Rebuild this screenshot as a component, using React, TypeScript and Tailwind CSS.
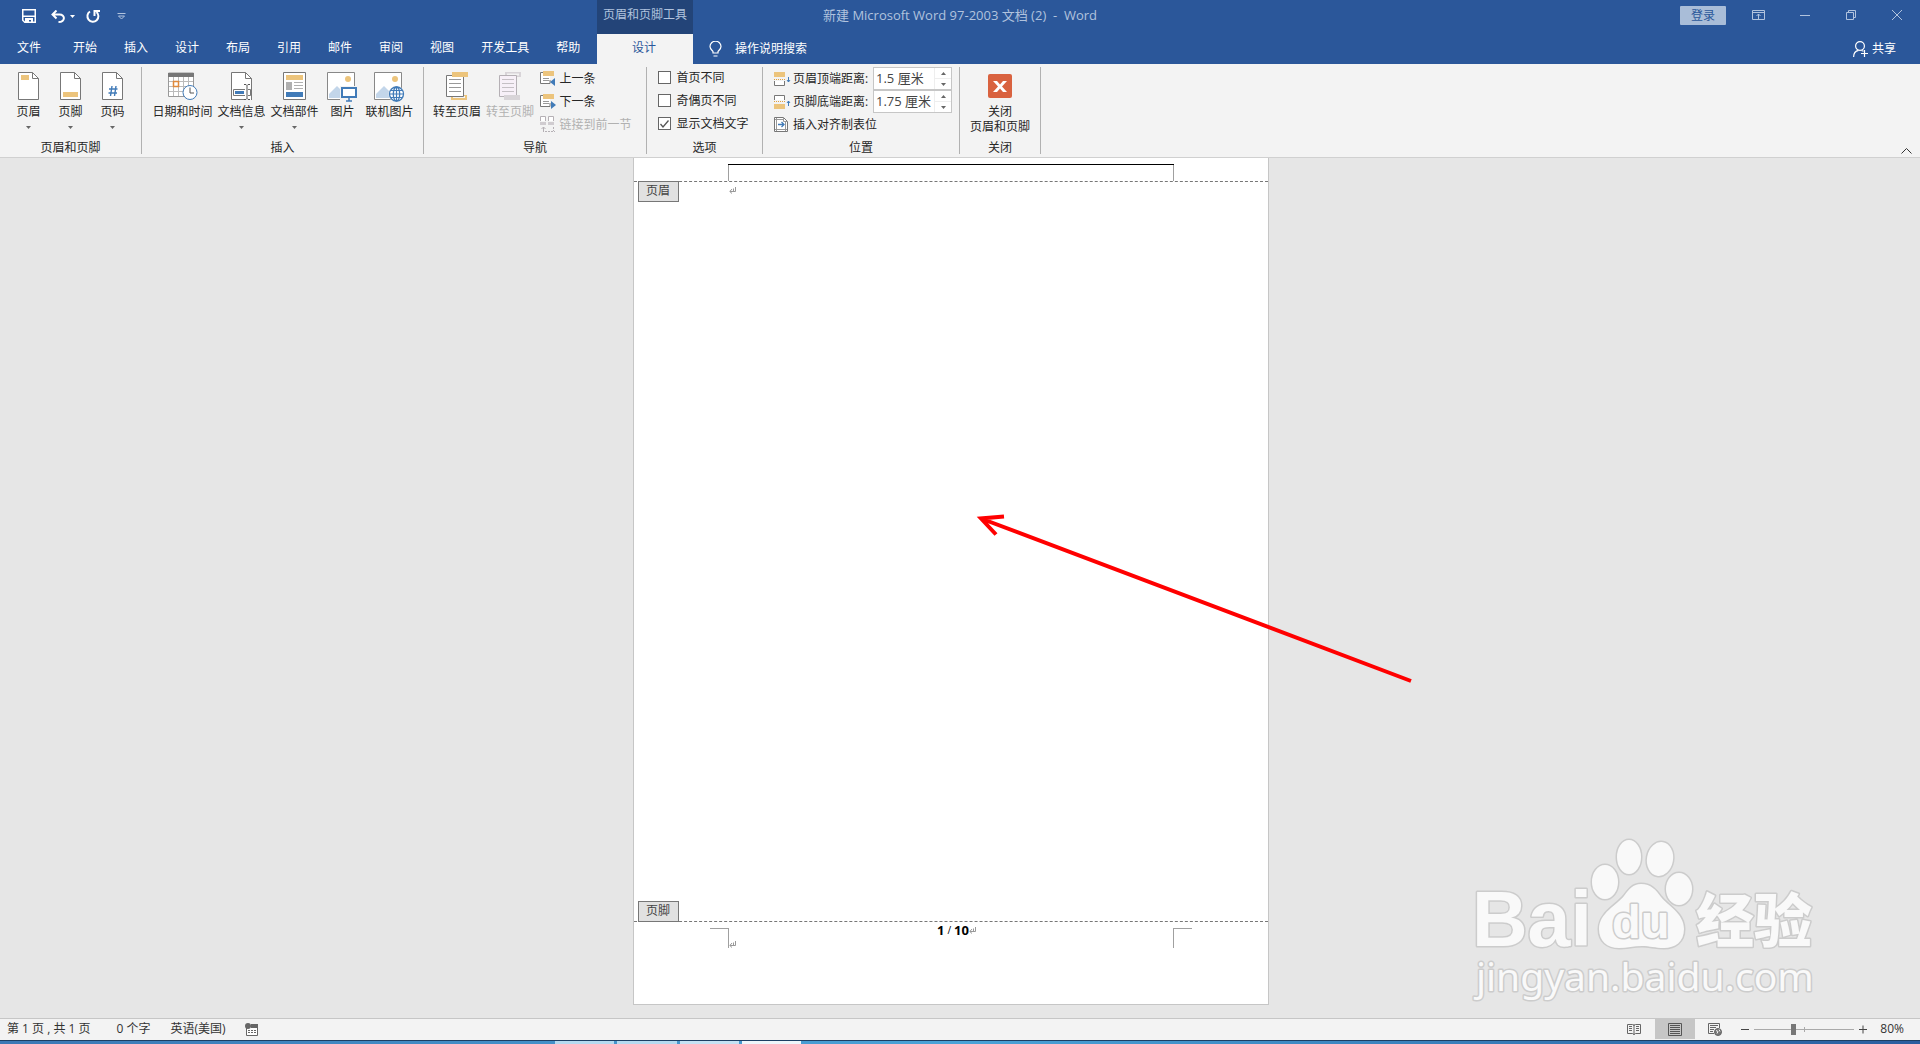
import type { ReactNode } from "react";

const HEADER_TABS = ["开始", "插入", "设计", "布局", "引用", "邮件", "审阅", "视图", "开发工具", "帮助"];

function Caret({ className = "" }: { className?: string }) {
  return (
    <svg width="5" height="3" viewBox="0 0 5 3" className={className}>
      <path d="M0 0h5L2.500 3z" fill="currentColor" />
    </svg>
  );
}

function Sheet({ children }: { children: ReactNode }) {
  return (
    <svg width="22" height="28" viewBox="0 0 22 28" fill="none">
      <path d="M.5.5h14l6 6v21H.500z" fill="#fff" stroke="#777" />
      <path d="M14.500.500v6h6" stroke="#777" />
      {children}
    </svg>
  );
}

const HeaderIcon = () => (
  <Sheet>
    <path d="M3 3h8v5H3z" fill="#ecc47c" />
  </Sheet>
);
const FooterIcon = () => (
  <Sheet>
    <path d="M3 20h15v5H3z" fill="#ecc47c" />
  </Sheet>
);
const PageNumberIcon = () => (
  <Sheet>
    <path d="M10 14 8.500 24M14 14l-1.500 10M7 17h8.500M6.500 21H15" stroke="#417bb8" strokeWidth="1.400" />
  </Sheet>
);
const DocInfoIcon = () => (
  <svg width="22" height="28" viewBox="0 0 22 28" fill="none">
    <path d="M.5.5h14l6 6v21H.500z" fill="#fff" stroke="#777" />
    <path d="M14.500.500v6h6" stroke="#777" />
    <path d="M2.500 17.500h13v6h-13z" fill="#fff" stroke="#777" />
    <path d="M4 19h9v3H4z" fill="#417bb8" />
    <path d="M14 12h6v16h-6z" fill="#fff" />
    <path d="M13 12.500h2l1 1 1-1h2M13 27.500h2l1-1 1 1h2M16 13.500v13" stroke="#555" />
    <path d="M17 17.500h2.500v6H17M20.500 10v18" stroke="#777" />
  </svg>
);
const CalendarIcon = () => (
  <svg width="30" height="28" viewBox="0 0 30 28" fill="none">
    <path d="M.5 1h25v23.500H.500z" fill="#fff" stroke="#999" />
    <path d="M0 1h26v4H0z" fill="#777" />
    <path d="M5.500 5v19M10.500 5v19M15.500 5v19M20.500 5v19M1 9.500h24M1 14.500h24M1 19.500h24" stroke="#bbb" />
    <path d="M5.500 9.500h5v5h-5z" fill="#fff" stroke="#e08a3c" strokeWidth="1.500" />
    <circle cx="22" cy="20.500" r="7" fill="#fff" stroke="#417bb8" />
    <path d="M22 15.500v5.500h4" stroke="#555" />
  </svg>
);
const PartsIcon = () => (
  <svg width="23" height="28" viewBox="0 0 23 28" fill="none">
    <path d="M.5.5h22v27H.500z" fill="#fff" stroke="#777" />
    <path d="M3 3h17v5H3z" fill="#ecc47c" />
    <path d="M3 10h6v8H3z" fill="#b0b0b0" />
    <path d="M11 10.500h9M11 13.500h9M11 16.500h9" stroke="#b0b0b0" />
    <path d="M3 20h17v5H3z" fill="#417bb8" />
  </svg>
);
function Photo() {
  return (
    <>
      <path d="M.5.5h27v27H.500z" fill="#fff" stroke="#888" />
      <circle cx="21" cy="7" r="3" fill="#ecc47c" />
      <path d="M2 26v-4l8-8 6 6v6z" fill="#c3d6ea" />
    </>
  );
}
const PictureIcon = () => (
  <svg width="31" height="30" viewBox="0 0 31 30" fill="none">
    <Photo />
    <path d="M13 14h18v16H13z" fill="#f3f3f3" />
    <path d="M15 16h14v9H15z" fill="#fff" stroke="#417bb8" strokeWidth="2" />
    <path d="M19 29h6M22 25v4" stroke="#417bb8" strokeWidth="1.500" />
  </svg>
);
const OnlinePictureIcon = () => (
  <svg width="31" height="30" viewBox="0 0 31 30" fill="none">
    <Photo />
    <circle cx="22.500" cy="22" r="8" fill="#f3f3f3" />
    <circle cx="22.500" cy="22" r="7" fill="#fff" stroke="#417bb8" strokeWidth="1.300" />
    <ellipse cx="22.500" cy="22" rx="3.200" ry="7" stroke="#417bb8" strokeWidth="1.300" />
    <path d="M15.500 22h14M17 18.500h11M17 25.500h11M22.500 15v14" stroke="#417bb8" strokeWidth="1.200" />
  </svg>
);
const GotoHeaderIcon = () => (
  <svg width="22" height="28" viewBox="0 0 22 28" fill="none">
    <path d="M5 23h16v5H5z" fill="#ecc47c" />
    <path d="M7 24h12v2H7z" fill="#f3f3f3" />
    <path d="M.5 3.500h17v21H.500z" fill="#fff" stroke="#777" />
    <path d="M3 7.500h12M3 11.500h12M3 15.500h12M3 19.500h12" stroke="#999" />
    <path d="M6 0h16v5H6z" fill="#ecc47c" />
  </svg>
);
const GotoFooterIcon = () => (
  <svg width="22" height="28" viewBox="0 0 22 28" fill="none">
    <path d="M6 0h16v5H6z" fill="#d8d4d8" />
    <path d="M8 1.500h12v2H8z" fill="#f3f3f3" />
    <path d="M.5 3.500h17v21H.500z" fill="#f7f0f8" stroke="#b5b0b5" />
    <path d="M3 7.500h12M3 11.500h12M3 15.500h12M3 19.500h12" stroke="#c5c0c5" />
    <path d="M5 23h16v5H5z" fill="#d8d4d8" />
  </svg>
);
function StepIcon({ arrow }: { arrow: string }) {
  return (
    <svg width="16" height="16" viewBox="0 0 16 16" fill="none">
      <path d="M1 2h9v10H1z" fill="#fff" />
      <path d="M3 1.500H.500v11H10V9" stroke="#777" />
      <path d="M3 7.500h6M3 9.500h6" stroke="#999" />
      <path d="M3 0h11v5H3z" fill="#ecc47c" />
      <path d={arrow} fill="#417bb8" />
    </svg>
  );
}
const LinkPrevIcon = () => (
  <svg width="16" height="17" viewBox="0 0 16 17" fill="none" stroke="#b5b0b5">
    <path d="M.5 5V.5h5V5M8.500 5V.5h5V5" fill="#fff" />
    <path d="M0 6h6v3H0zM8 6h6v3H8z" fill="#d0ccd0" stroke="none" />
    <path d="M3.500 16v-5M1.500 13l2-2 2 2" />
    <path d="M5 15.500h10M13.500 11v4" strokeDasharray="2 1" />
  </svg>
);
function DistanceIcon({ bottom = false }: { bottom?: boolean }) {
  return (
    <svg width="17" height="14" viewBox="0 0 17 14" fill="none">
      {bottom ? (
        <>
          <path d="M.5 5V.5h10V5" fill="#fff" stroke="#777" />
          <path d="M0 9h11v5H0z" fill="#ecc47c" />
          <path d="M0 6.500h11" stroke="#e0a040" strokeDasharray="1 1" />
          <path d="M14.500 11V6M13 8l1.500-2L16 8" stroke="#417bb8" />
        </>
      ) : (
        <>
          <path d="M.5 9v4.500h10V9" fill="#fff" stroke="#777" />
          <path d="M0 0h11v5H0z" fill="#ecc47c" />
          <path d="M0 7.500h11" stroke="#e0a040" strokeDasharray="1 1" />
          <path d="M14.500 5v5M13 8l1.500 2L16 8" stroke="#417bb8" />
        </>
      )}
    </svg>
  );
}
const AlignTabIcon = () => (
  <svg width="14" height="15" viewBox="0 0 14 15" fill="none">
    <path d="M.5.5h9l4 4v10H.500z" fill="#fff" stroke="#777" />
    <path d="M9.500.500v4h4M2.500 1v13M11.500 5v9M1 2.500h8M1 12.500h12" stroke="#999" />
    <path d="M4 7.500h6M7.500 5 10 7.500 7.500 10" stroke="#417bb8" strokeWidth="1.300" />
  </svg>
);

function Group({ label, width, children }: { label: string; width: string; children: ReactNode }) {
  return (
    <section aria-label={label} className={`${width} flex shrink-0 flex-col border-r border-[#b1b1b1]`}>
      <div className="flex flex-1 justify-center">{children}</div>
      <div className="h-[13px] text-center leading-[13px]">{label}</div>
    </section>
  );
}

function BigButton({
  icon,
  label,
  width,
  menu = false,
  disabled = false,
}: {
  icon: ReactNode;
  label: string;
  width: string;
  menu?: boolean;
  disabled?: boolean;
}) {
  return (
    <button disabled={disabled} className={`${width} flex flex-col items-center pt-[5px] whitespace-nowrap disabled:text-[#b1b1b1]`}>
      <span className="flex h-8 items-start">{icon}</span>
      <span className="h-4 leading-4">{label}</span>
      {menu && <Caret className="mt-[6px] text-[#666]" />}
    </button>
  );
}

function SmallButton({ icon, label, disabled = false }: { icon: ReactNode; label: string; disabled?: boolean }) {
  return (
    <button disabled={disabled} className="flex h-[23px] items-center whitespace-nowrap disabled:text-[#b1b1b1]">
      <span className="w-[19px]">{icon}</span>
      {label}
    </button>
  );
}

function Check({ label, checked = false }: { label: string; checked?: boolean }) {
  return (
    <label className="flex h-[23px] items-center gap-[5px] pb-[2px] whitespace-nowrap">
      <span className="grid h-[13px] w-[13px] place-items-center">
        <input
          type="checkbox"
          defaultChecked={checked}
          className="peer col-start-1 row-start-1 h-[13px] w-[13px] appearance-none border border-[#666] bg-white"
        />
        <svg width="9" height="8" viewBox="0 0 9 8" className="pointer-events-none invisible col-start-1 row-start-1 peer-checked:visible">
          <path d="M.5 4 3 7 8.500.500" fill="none" stroke="#555" strokeWidth="1.300" />
        </svg>
      </span>
      {label}
    </label>
  );
}

function Distance({ id, label, value, bottom = false }: { id: string; label: string; value: string; bottom?: boolean }) {
  return (
    <div className="flex h-[23px] items-center whitespace-nowrap">
      <span className="w-[19px]">
        <DistanceIcon bottom={bottom} />
      </span>
      <label htmlFor={id} className="w-20">
        {label}:
      </label>
      <span className="flex h-[23px] w-[79px] border border-[#c6c6c6] bg-white">
        <input id={id} defaultValue={value} className="w-[60px] bg-transparent pl-[2px] text-[13px] text-[#444] outline-none" />
        <span className="flex flex-1 flex-col border-l border-[#eee] text-[#666]">
          <button aria-label={`增加${label}`} className="flex flex-1 items-center justify-center border-b border-[#eee]">
            <Caret className="rotate-180" />
          </button>
          <button aria-label={`减少${label}`} className="flex flex-1 items-center justify-center">
            <Caret />
          </button>
        </span>
      </span>
    </div>
  );
}

function TitleBar() {
  return (
    <div className="grid h-[34px] grid-cols-[597px_96px_1fr] bg-[#2b579a] text-[#b1c3de]">
      <h1 className="col-span-full row-start-1 h-[30px] text-center text-[13px] leading-[30px] whitespace-pre">
        新建 Microsoft Word 97-2003 文档 (2)  -  Word
      </h1>
      <div className="col-start-1 row-start-1 flex h-8 items-center pl-[22px] text-white">
        <button aria-label="保存">
          <svg width="14" height="14" viewBox="0 0 14 14" fill="none" stroke="#fff" strokeWidth="1.500">
            <path d="M.750.750h12.500v12.500H2.750l-2-2zM1 7.250h12" />
            <path d="M3 9h8v5H9v-3H7v3H3z" fill="#fff" stroke="none" />
          </svg>
        </button>
        <button aria-label="撤消" className="ml-[15px]">
          <svg width="14" height="13" viewBox="0 0 14 13" fill="none" stroke="#fff" strokeWidth="2">
            <path d="M1 4.500h7.500c6 0 6 7.500-1 7.500M5.500.500l-4 4 4 4" />
          </svg>
        </button>
        <button aria-label="撤消列表" className="ml-[5px]">
          <Caret />
        </button>
        <button aria-label="重复" className="ml-[11px]">
          <svg width="14" height="14" viewBox="0 0 14 14" fill="none" stroke="#fff" strokeWidth="2">
            <path d="M4 2.500A5.500 5.500 0 1 0 10.500 3M8.500 7V2H14" />
          </svg>
        </button>
        <button aria-label="自定义快速访问工具栏" className="ml-[17px]">
          <svg width="9" height="7" viewBox="0 0 9 7" fill="none" stroke="#b1c3de">
            <path d="M.5.5h8M1.500 3l3 3 3-3z" />
          </svg>
        </button>
      </div>
      <div className="col-start-2 row-start-1 h-[34px] bg-[#234478] text-center leading-[30px]">页眉和页脚工具</div>
      <div className="col-start-3 row-start-1 flex h-[30px] items-center justify-end pr-[18px]">
        <button className="h-[19px] w-[46px] rounded-[1px] bg-[#a9bdd8] leading-[19px] text-[#2b579a]">登录</button>
        <button aria-label="功能区显示选项" className="ml-[26px]">
          <svg width="13" height="10" viewBox="0 0 13 10" fill="none" stroke="#b1c3de">
            <path d="M.5.5h12v9H.500zM1 2.500h11M6.500 9V4M4.500 6l2-2 2 2" />
          </svg>
        </button>
        <button aria-label="最小化" className="ml-[35px]">
          <svg width="10" height="10" viewBox="0 0 10 10" stroke="#b1c3de">
            <path d="M0 5.500h10" />
          </svg>
        </button>
        <button aria-label="还原" className="ml-9">
          <svg width="10" height="10" viewBox="0 0 10 10" fill="none" stroke="#b1c3de">
            <path d="M.5 2.500h7v7h-7zM2.500 2V.5h7v7H8" />
          </svg>
        </button>
        <button aria-label="关闭" className="ml-9">
          <svg width="10" height="10" viewBox="0 0 10 10" stroke="#b1c3de">
            <path d="m0 0 10 10M10 0 0 10" />
          </svg>
        </button>
      </div>
    </div>
  );
}

function TabRow() {
  return (
    <nav className="grid h-[30px] grid-cols-[597px_96px_1fr] bg-[#2b579a] text-white">
      <div className="flex items-center gap-px pb-[2px]">
        <button className="mr-px w-[58px] text-center">文件</button>
        {HEADER_TABS.map((t) => (
          <button key={t} className="px-[13px] whitespace-nowrap">
            {t}
          </button>
        ))}
      </div>
      <button className="bg-[#f3f3f3] pr-[2px] pb-[2px] text-[#2b579a]">设计</button>
      <div className="flex items-center pr-6 pl-4">
        <svg width="13" height="16" viewBox="0 0 13 16" fill="none" stroke="#fff" strokeWidth="1.200">
          <path d="M4 12V10.500C3 9 1 8 1 5.500a5.200 5 0 0 1 11 0C12 8 10 9 9 10.500V12zM4.500 15h4" />
        </svg>
        <input aria-label="操作说明搜索" placeholder="操作说明搜索" className="ml-[13px] w-40 bg-transparent outline-none placeholder:text-white placeholder:opacity-100" />
        <button className="ml-auto flex items-center gap-1 pb-px">
          <svg width="15" height="16" viewBox="0 0 15 16" fill="none" stroke="#fff" strokeWidth="1.200">
            <circle cx="7" cy="5" r="4.400" />
            <path d="M.6 16c0-3.500 2-6 5-6.600M8.500 9.500l2 .8M11.500 9v7M8 12.500h7" />
          </svg>
          共享
        </button>
      </div>
    </nav>
  );
}

function Ribbon() {
  return (
    <div className="flex border-b border-[#d0d0d0] bg-[#f3f3f3] py-[3px] text-[#262626]">
      <div className="flex h-[87px] flex-1">
        <Group label="页眉和页脚" width="w-[142px]">
          <BigButton icon={<HeaderIcon />} label="页眉" width="w-[42px]" menu />
          <BigButton icon={<FooterIcon />} label="页脚" width="w-[42px]" menu />
          <BigButton icon={<PageNumberIcon />} label="页码" width="w-[42px]" menu />
        </Group>
        <Group label="插入" width="w-[282px]">
          <BigButton icon={<CalendarIcon />} label="日期和时间" width="w-16" />
          <BigButton icon={<DocInfoIcon />} label="文档信息" width="w-[54px]" menu />
          <BigButton icon={<PartsIcon />} label="文档部件" width="w-[52px]" menu />
          <BigButton icon={<PictureIcon />} label="图片" width="w-[44px]" />
          <BigButton icon={<OnlinePictureIcon />} label="联机图片" width="w-[50px]" />
        </Group>
        <Group label="导航" width="w-[223px]">
          <BigButton icon={<GotoHeaderIcon />} label="转至页眉" width="w-[53px]" />
          <BigButton icon={<GotoFooterIcon />} label="转至页脚" width="w-[53px]" disabled />
          <div className="flex flex-col pr-2 pl-1">
            <SmallButton icon={<StepIcon arrow="M15 7v8l-5-4z" />} label="上一条" />
            <SmallButton icon={<StepIcon arrow="M11 7v8l5-4z" />} label="下一条" />
            <SmallButton icon={<LinkPrevIcon />} label="链接到前一节" disabled />
          </div>
        </Group>
        <Group label="选项" width="w-[116px]">
          <div className="flex flex-col pr-[2px]">
            <Check label="首页不同" />
            <Check label="奇偶页不同" />
            <Check label="显示文档文字" checked />
          </div>
        </Group>
        <Group label="位置" width="w-[197px]">
          <div className="flex flex-col pl-1">
            <Distance id="header-distance" label="页眉顶端距离" value="1.5 厘米" />
            <Distance id="footer-distance" label="页脚底端距离" value="1.75 厘米" bottom />
            <SmallButton icon={<AlignTabIcon />} label="插入对齐制表位" />
          </div>
        </Group>
        <Group label="关闭" width="w-[81px]">
          <button className="flex flex-col items-center pt-[7px] leading-[15px]">
            <svg width="24" height="24" viewBox="0 0 24 24" className="mb-[6px]">
              <rect width="24" height="24" rx="2" fill="#d9623f" />
              <path d="M5 7h4l3 3.500L15 7h4l-5 5.500 5 5.500h-4l-3-3.500L9 18H5l5-5.500z" fill="#fff" />
            </svg>
            关闭
            <br />
            页眉和页脚
          </button>
        </Group>
      </div>
      <button aria-label="折叠功能区" className="self-end pr-2">
        <svg width="11" height="6" viewBox="0 0 11 6" fill="none" stroke="#333">
          <path d="m.5 5.500 5-5 5 5" />
        </svg>
      </button>
    </div>
  );
}

const ReturnMark = () => (
  <svg width="7" height="7" viewBox="0 0 7 7" fill="none" stroke="#999">
    <path d="M6.500 0v4.500H1M3 2 .8 4.500 3 6.500M4.500 1.500v3" />
  </svg>
);

function DocumentPage() {
  return (
    <article className="flex w-[636px] flex-col self-stretch border-x border-b border-[#c6c6c6] bg-white">
      <div className="flex h-[23px] px-[94px]">
        <div className="mt-[6px] flex-1 border-t border-black">
          <div className="h-full border-x border-[#a0a0a0]" />
        </div>
      </div>
      <div className="flex flex-1 flex-col justify-between border-y border-dashed border-[#777]">
        <div className="flex">
          <div className="-mt-px ml-1 h-[21px] w-[41px] border border-[#777] bg-[#e1e1e1] pr-px text-center leading-[18px] text-[#444]">页眉</div>
          <div className="mt-[5px] ml-[50px]">
            <ReturnMark />
          </div>
        </div>
        <div className="-mb-px ml-1 h-[21px] w-[41px] border border-[#777] bg-[#e1e1e1] pr-px text-center leading-[18px] text-[#444]">页脚</div>
      </div>
      <div className="flex h-[82px] items-start justify-between px-[76px]">
        <div className="mt-[6px] flex items-end">
          <div className="h-5 w-[19px] border-t border-r border-[#a0a0a0]" />
          <ReturnMark />
        </div>
        <div className="flex items-center pl-1 text-[13px] leading-4 font-bold text-black">
          1<span className="px-[3px] text-[10px] font-normal">/</span>10
          <ReturnMark />
        </div>
        <div className="mt-[6px] h-5 w-[19px] border-t border-l border-[#a0a0a0]" />
      </div>
    </article>
  );
}

function Watermark() {
  return (
    <svg width="360" height="180" viewBox="1470 830 360 180" className="absolute right-[90px] bottom-[8px]">
      <g fill="#f9f9f9" stroke="#cccccc" strokeWidth="3" paintOrder="stroke" strokeLinejoin="round">
        <text x="1472" y="946" fontSize="77" fontWeight="700" fontFamily="Liberation Sans">
          Bai
        </text>
        <ellipse cx="1605" cy="882" rx="13" ry="17" />
        <ellipse cx="1629" cy="857" rx="12" ry="17" />
        <ellipse cx="1660" cy="859" rx="13" ry="17" transform="rotate(10 1660 859)" />
        <ellipse cx="1679" cy="889" rx="13" ry="16" />
        <path d="M1641 884c10 0 15 6 20 13 6 8 23 16 23 32 0 13-9 19-20 19-9 0-14-2-22-2s-15 2-23 2c-12 0-20-7-20-19 0-16 18-24 25-33 5-7 9-12 17-12z" />
        <text x="1612" y="938" fontSize="47" fontWeight="700" fontFamily="Liberation Sans">
          du
        </text>
        <text x="1696" y="942" fontSize="58" fontWeight="900" fontFamily="Noto Sans CJK SC">
          经验
        </text>
        <text x="1476" y="991" fontSize="39" fontFamily="Noto Sans">
          jingyan.baidu.com
        </text>
      </g>
    </svg>
  );
}

function StatusBar() {
  return (
    <footer className="flex h-[22px] items-center border-t border-[#c6c6c6] bg-[#f3f3f3] pb-px text-[#333]">
      <span className="pl-[7px] whitespace-pre">第 1 页 , 共 1 页</span>
      <span className="pl-[26px]">0 个字</span>
      <span className="pl-5">英语(美国)</span>
      <button aria-label="宏录制" className="ml-[19px]">
        <svg width="13" height="13" viewBox="0 0 13 13" fill="none">
          <path d="M1.500 5v7.500h11V2" fill="#fff" stroke="#666" />
          <path d="M6 1h7v4H6z" fill="#666" />
          <circle cx="3" cy="3" r="3" fill="#666" />
          <path d="M3 7.500h8M3 9.500h8" stroke="#666" strokeDasharray="2 1" />
        </svg>
      </button>
      <div className="ml-auto flex items-center self-stretch pr-4">
        <button aria-label="阅读视图" className="mr-[14px]">
          <svg width="14" height="12" viewBox="0 0 14 12" fill="none" stroke="#666">
            <path d="M.5 1.500h5l1.500 1 1.500-1h5v9h-5l-1.500 1-1.500-1h-5zM7 1v11M2 3.500h3M2 5.500h3M2 7.500h3M9 3.500h3M9 5.500h3M9 7.500h3" />
          </svg>
        </button>
        <button aria-label="页面视图" className="flex h-full w-10 items-center justify-center bg-[#c6c6c6]">
          <svg width="14" height="13" viewBox="0 0 14 13" fill="none" stroke="#555">
            <path d="M.5.5h13v12H.500zM2 2.500h10M2 4.500h10M2 6.500h10M2 8.500h10M2 10.500h10" />
          </svg>
        </button>
        <button aria-label="Web 版式视图" className="ml-[13px]">
          <svg width="14" height="13" viewBox="0 0 14 13" fill="none" stroke="#666">
            <path d="M6 10.500H.500V.500h11V5M2 2.500h8M2 4.500h6M2 6.500h4M2 8.500h3" />
            <circle cx="10" cy="9" r="3.500" fill="#777" />
            <path d="m8 7.500 2 1-1 2M11 6.500l1 2" stroke="#f3f3f3" />
          </svg>
        </button>
        <button aria-label="缩小" className="ml-[19px]">
          <svg width="8" height="9" viewBox="0 0 8 9" stroke="#444">
            <path d="M0 4.500h8" />
          </svg>
        </button>
        <span className="ml-[5px] grid items-center">
          <span className="col-start-1 row-start-1 h-[5px] w-px justify-self-center bg-[#aaa]" />
          <input
            type="range"
            aria-label="缩放"
            min="0"
            max="100"
            defaultValue="39"
            className="col-start-1 row-start-1 h-[11px] w-[100px] appearance-none bg-[linear-gradient(#aaa,#aaa)] bg-[length:100%_1px] bg-center bg-no-repeat [&::-webkit-slider-thumb]:h-[11px] [&::-webkit-slider-thumb]:w-[5px] [&::-webkit-slider-thumb]:appearance-none [&::-webkit-slider-thumb]:bg-[#777]"
          />
        </span>
        <button aria-label="放大" className="ml-[5px]">
          <svg width="8" height="9" viewBox="0 0 8 9" stroke="#444">
            <path d="M0 4.500h8M4 .5v8" />
          </svg>
        </button>
        <button className="ml-[13px]">80%</button>
      </div>
    </footer>
  );
}

function Taskbar() {
  return (
    <div className="flex h-1 border-t border-[#1c3f63] bg-linear-to-r from-[#3b78b5] via-[#4aa3d8] to-[#2a5d9f] pl-[555px]">
      <span className="mr-[3px] w-[59px] bg-[#b5daf0]" />
      <span className="mr-[3px] w-[60px] bg-[#b5daf0]" />
      <span className="mr-[3px] w-[59px] bg-[#c5e2f4]" />
      <span className="w-[59px] bg-[#eef6fb]" />
    </div>
  );
}

export default function App() {
  return (
    <div className="flex h-screen flex-col overflow-hidden bg-[#e6e6e6] font-['Open_Sans','Noto_Sans_CJK_SC',sans-serif] text-[12px]">
      <header>
        <TitleBar />
        <TabRow />
        <Ribbon />
      </header>
      <main className="relative flex flex-1 justify-center overflow-hidden pr-[18px] pb-[13px]">
        <DocumentPage />
        <svg width="440" height="172" viewBox="976 512 440 172" className="absolute top-[355px] left-1/2 ml-4" fill="none" stroke="#f00" strokeWidth="4">
          <path d="M1411 680 981 517.500M1004 515.500l-23 2 15 16" />
        </svg>
        <Watermark />
      </main>
      <StatusBar />
      <Taskbar />
    </div>
  );
}
